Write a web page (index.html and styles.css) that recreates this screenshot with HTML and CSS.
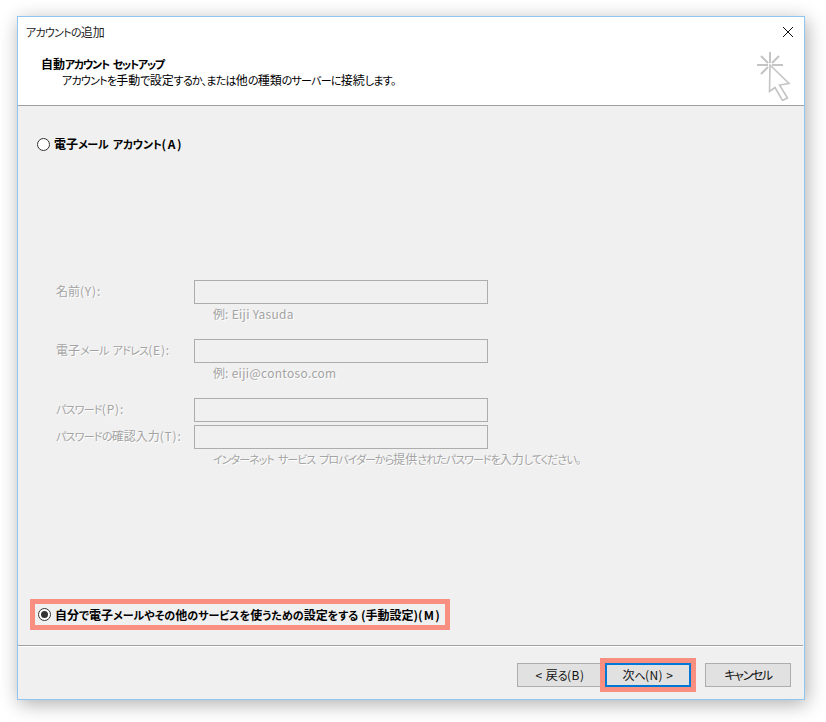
FILE: index.html
```html
<!DOCTYPE html>
<html lang="ja">
<head>
<meta charset="utf-8">
<title>アカウントの追加</title>
<link rel="stylesheet" href="styles.css">
</head>
<body>
<div class="window">
  <div class="top">
    <div class="titlebar">
      <span class="title"><span class="k">アカウントの</span>追加</span>
      <svg class="close" width="12" height="12" viewBox="0 0 12 12"><path d="M1 1L11 11M11 1L1 11" stroke="#111" stroke-width="1" fill="none"/></svg>
    </div>
    <div class="header">
      <div class="header-text">
        <div class="h-title">自動<span class="k">アカウント セットアップ</span></div>
        <div class="h-sub"><span class="k">アカウントを</span>手動<span class="k">で</span>設定<span class="k">するか、または</span>他<span class="k">の</span>種類<span class="k">のサーバーに</span>接続<span class="k">します。</span></div>
      </div>
      <svg class="cursor" width="36" height="50" viewBox="0 0 36 50">
        <g stroke="#c4c4c4" stroke-width="2" fill="none">
          <path d="M14 1V12M1 14H12M16 14H27M5 5L12 12M23 5L16 12M5 23L12 16"/>
          <path d="M14 14L33 32.5L23.5 34L31.5 47L26.5 49.5L19 36.5L13.5 40.5Z" stroke-width="1.6" fill="#fff"/>
        </g>
      </svg>
    </div>
  </div>
  <div class="main">
    <div class="radio-row first">
      <span class="radio"></span>
      <span class="radio-label">電子<span class="k">メール アカウント</span><span class="lat">(A)</span></span>
    </div>
    <div class="form">
      <div class="field"><span class="lbl">名前<span class="lat">(Y):</span></span><span class="input"></span></div>
      <div class="hint hint-a">例<span class="lat">: Eiji Yasuda</span></div>
      <div class="field f2"><span class="lbl">電子<span class="k">メール アドレス</span><span class="lat">(E):</span></span><span class="input"></span></div>
      <div class="hint hint-a">例<span class="lat">: eiji@contoso.com</span></div>
      <div class="field f3"><span class="lbl"><span class="k">パスワード</span><span class="lat">(P):</span></span><span class="input"></span></div>
      <div class="field f4"><span class="lbl"><span class="k">パスワードの</span>確認入力<span class="lat">(T):</span></span><span class="input"></span></div>
      <div class="hint hint-b"><span class="k">インターネット サービス プロバイダーから</span>提供<span class="k">されたパスワードを</span>入力<span class="k">してください。</span></div>
    </div>
    <div class="manual">
      <span class="radio on"></span>
      <span class="radio-label">自分<span class="k">で</span>電子<span class="k">メールやその</span>他<span class="k">のサービスを</span>使<span class="k">うための</span>設定<span class="k">をする</span> (手動設定)<span class="lat">(M)</span></span>
    </div>
  </div>
  <div class="footer">
    <button class="btn"><span class="lat">&lt; </span>戻<span class="k">る</span><span class="lat">(B)</span></button>
    <button class="btn next">次<span class="k">へ</span><span class="lat">(N) &gt;</span></button>
    <button class="btn cancel"><span class="k">キャンセル</span></button>
  </div>
</div>
</body>
</html>
```
FILE: styles.css
```css
html, body { margin: 0; height: 100%; background: #fff; }
body {
  width: 826px; height: 722px; overflow: hidden; box-sizing: border-box;
  padding: 16px 21px 0 17px;
  font: 12px/16px "Noto Sans CJK JP", "Noto Sans", sans-serif;
  font-feature-settings: "palt";
  color: #000;
}
.k { font-size: 11px; letter-spacing: -.75px; word-spacing: 2.5px; }
.lat { letter-spacing: .5px; }
.window {
  box-sizing: border-box; width: 788px; height: 684px;
  border: 1px solid #8ec5f2;
  background: #f0f0f0;
  box-shadow: 2px 4px 18px rgba(0,0,0,.32);
  display: flex; flex-direction: column;
}
.top { background: #fff; height: 88px; border-bottom: 1px solid #a0a0a0; flex: none; }
.titlebar { display: flex; justify-content: space-between; align-items: center; height: 30px; padding: 0 10px 0 8px; }
.title { color: #222; }
.close { display: block; }
.header { display: flex; justify-content: space-between; padding: 9px 12px 0 23px; }
.h-title { font-weight: 700; }
.h-title .k { letter-spacing: -1.25px; }
.h-sub { padding-left: 21px; }
.cursor { margin-top: -5px; }
.main { flex: 1; display: flex; flex-direction: column; padding: 30px 0 0 19px; }
.radio-row { display: flex; align-items: center; gap: 4px; height: 16px; }
.radio-row .k { letter-spacing: -.3px; }
.radio-row .lat { letter-spacing: 1.6px; }
.radio {
  box-sizing: border-box; width: 13px; height: 13px; border-radius: 50%;
  border: 1px solid #333; background: #fff; flex: none; display: flex; align-items: center; justify-content: center;
}
.radio.on::after { content: ""; width: 7px; height: 7px; border-radius: 50%; background: #333; }
.radio-label { font-weight: 700; white-space: nowrap; }
.form { padding: 128px 0 0 19px; color: #a3a3a3; text-shadow: 1px 1px 0 #fff; flex: 1; }
.field { display: flex; align-items: center; height: 24px; }
.f2 { margin-top: 23px; }
.f3 { margin-top: 23px; }
.f4 { margin-top: 3px; }
.lbl { width: 138px; white-space: nowrap; padding-bottom: 2px; }
.lbl .lat { letter-spacing: .8px; }
.input { box-sizing: border-box; width: 294px; height: 24px; border: 1px solid #adadad; background: #f0f0f0; }
.hint { padding-left: 157px; height: 10px; margin-top: 2px; line-height: 16px; white-space: nowrap; }
.hint-a .lat { letter-spacing: .3px; }
.hint-b .k { letter-spacing: -.95px; }
.manual {
  display: flex; align-items: center; gap: 4px; align-self: flex-start;
  border: 5px solid #f98f80; height: 31px; box-sizing: border-box;
  margin: 0 0 15px -7px; padding: 0 4px 0 3px;
}
.manual .k { letter-spacing: 0; }
.manual .lat { letter-spacing: 1.2px; }
.footer {
  flex: none; height: 54px; box-sizing: border-box; margin-right: 1px;
  border-top: 1px solid #a0a0a0; box-shadow: inset 0 1px 0 #fff;
  display: flex; justify-content: flex-end; align-items: flex-start;
  padding: 17px 12px 0 0; gap: 14px;
}
.btn {
  box-sizing: border-box; width: 86px; height: 24px; padding: 0;
  background: #e1e1e1; border: 1px solid #adadad; color: #111;
  font: inherit; font-feature-settings: "palt";
}
.next { border: 2px solid #0078d7; margin-left: -12px; outline: 5px solid #f98f80; }
.cancel .k { font-size: 12px; letter-spacing: -1.4px; }
```
